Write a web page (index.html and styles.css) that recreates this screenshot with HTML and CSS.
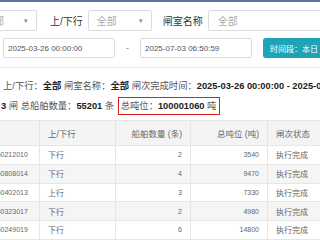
FILE: index.html
```html
<!DOCTYPE html>
<html>
<head>
<meta charset="utf-8">
<link rel="stylesheet" href="styles.css">
</head>
<body>
<div class="topline"></div>
<div class="filters">
  <div class="select sel-first"><span class="val">全部</span><span class="caret">▾</span></div>
  <label class="lbl lbl-dir">上/下行</label>
  <div class="select sel-dir"><span class="val">全部</span><span class="caret">▾</span></div>
  <label class="lbl lbl-lock">闸室名称</label>
  <div class="input inp-lock"><span class="val">全部</span></div>
</div>
<div class="dates">
  <div class="input date">2025-03-26 00:00:00</div>
  <span class="dash">-</span>
  <div class="input date">2025-07-03 06:50:59</div>
  <div class="btn">时间段：本日</div>
</div>
<div class="sep"></div>
<div class="summary">
  <div class="line">上/下行：<b>全部</b> 闸室名称：<b>全部</b> 闸次完成时间：<b>2025-03-26 00:00:00 - 2025-07-03 06:50:59</b></div>
  <div class="line line2"><b>3</b> 闸 总船舶数量：<b>55201</b> 条 <span class="hl">总吨位：<b>100001060</b> 吨</span></div>
</div>
<table class="grid">
  <thead>
    <tr><th class="c1"></th><th class="c2">上/下行</th><th class="c3 num">船舶数量 (条)</th><th class="c4 num">总吨位 (吨)</th><th class="c5">闸次状态</th></tr>
  </thead>
  <tbody>
    <tr><td class="c1 id">20250212010</td><td>下行</td><td class="num n">2</td><td class="num n">3540</td><td>执行完成</td></tr>
    <tr><td class="c1 id">20250808014</td><td>下行</td><td class="num n">4</td><td class="num n">9470</td><td>执行完成</td></tr>
    <tr><td class="c1 id">20250402013</td><td>上行</td><td class="num n">3</td><td class="num n">7330</td><td>执行完成</td></tr>
    <tr><td class="c1 id">20250323017</td><td>下行</td><td class="num n">2</td><td class="num n">4980</td><td>执行完成</td></tr>
    <tr><td class="c1 id">20250249019</td><td>下行</td><td class="num n">6</td><td class="num n">14800</td><td>执行完成</td></tr>
  </tbody>
</table>
</body>
</html>
```
FILE: styles.css
```css
html, body {
  margin: 0;
  padding: 0;
  width: 320px;
  height: 240px;
  overflow: hidden;
  background: #fff;
  font-family: "Liberation Sans", "Noto Sans CJK SC", sans-serif;
  color: #333;
}
.topline {
  height: 2px;
  background: #5a76a0;
}
.filters {
  display: flex;
  align-items: center;
  margin-top: 8px;
  height: 21px;
  white-space: nowrap;
}
.select, .input {
  box-sizing: border-box;
  height: 21px;
  border: 1px solid #dcdcdc;
  border-radius: 2px;
  display: flex;
  align-items: center;
  font-size: 10px;
  color: #aaa;
  flex: none;
}
.select .val { flex: 1; padding-left: 8px; }
.select .caret { font-size: 7px; color: #888; padding-right: 8px; }
.sel-first { width: 62px; margin-left: -25px; }
.lbl { font-size: 10px; color: #333; flex: none; }
.lbl-dir { margin-left: 13px; }
.sel-dir { width: 64px; margin-left: 5px; }
.lbl-lock { margin-left: 11px; }
.inp-lock { width: 130px; margin-left: 5px; }
.inp-lock .val { padding-left: 9px; }
.dates {
  display: flex;
  align-items: center;
  margin-top: 7px;
  height: 20px;
  padding-left: 3px;
  white-space: nowrap;
}
.date {
  width: 112px;
  height: 20px;
  padding-left: 4px;
  font-size: 8px;
  color: #555;
}
.dash { flex: none; width: 25px; text-align: center; font-size: 9px; color: #888; }
.btn {
  flex: none;
  margin-left: 11px;
  height: 20px;
  width: 80px;
  box-sizing: border-box;
  background: #1fa3b6;
  border-radius: 3px;
  color: #fff;
  font-size: 8px;
  display: flex;
  align-items: center;
  padding-left: 7px;
}
.sep {
  margin-top: 9px;
  height: 1px;
  background: #e6e6e6;
}
.summary {
  padding-top: 8px;
  font-size: 9.3px;
  color: #555;
  white-space: nowrap;
}
.summary b { color: #222; font-weight: bold; }
.line { height: 20px; line-height: 20px; padding-left: 3px; }
.line2 { padding-left: 1px; }
.hl {
  display: inline-block;
  border: 1px solid #e21b1b;
  line-height: 16px;
  padding: 0 3px 0 2px;
  margin-left: 1px;
}
.grid {
  margin-top: 4px;
  margin-left: -24px;
  border-collapse: collapse;
  table-layout: fixed;
  width: 380px;
  font-size: 8.5px;
  color: #666;
}
.grid th, .grid td {
  border: 1px solid #e6e6e6;
  padding: 0 8px;
  text-align: left;
  white-space: nowrap;
  overflow: hidden;
  font-weight: normal;
}
.grid th {
  height: 24px;
  background: #f4f4f4;
  color: #666;
}
.grid td { height: 17.75px; font-size: 8px; }
.grid tbody tr:nth-child(even) td { background: #f5f5f5; }
.c1 { width: 46px; }
.c2 { width: 59px; }
.c3 { width: 58px; }
.c4 { width: 60px; }
.c5 { width: 100px; }
.grid .num { text-align: right; }
.grid .n { font-size: 7px; color: #666; }
.grid .id { font-size: 7px; color: #666; }
```
